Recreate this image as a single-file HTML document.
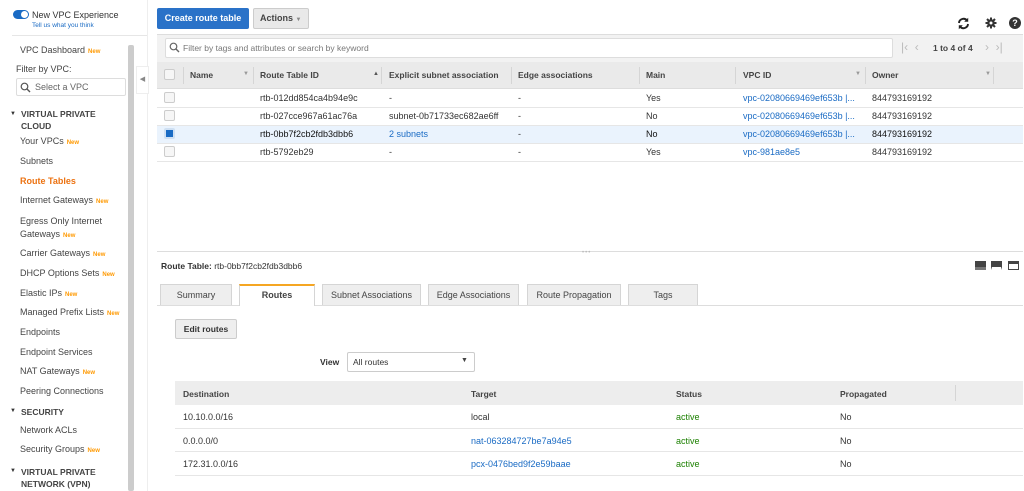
<!DOCTYPE html>
<html><head><meta charset="utf-8"><style>
*{margin:0;padding:0;box-sizing:border-box}
body{width:1024px;height:491px;overflow:hidden;background:#fff;font-family:"Liberation Sans",sans-serif;font-size:9px;color:#333;position:relative}
.a{position:absolute;white-space:nowrap}
.nav{font-size:9px;color:#444;left:20px}
.new{color:#f90;font-size:6px;font-weight:bold;margin-left:3px}
.hdr{font-weight:bold;font-size:8.5px;color:#444}
.cb{position:absolute;width:11px;height:11px;border:1px solid #ccc;border-radius:2px;background:#f6f6f6}
.lnk{color:#1a6bc4}
.tab{position:absolute;top:284px;height:21px;border:1px solid #d5d5d5;border-bottom:none;background:#eee;text-align:center;line-height:20px;font-size:9px;color:#444}
.sep{position:absolute;height:1px;background:#e6e6e6}
</style></head><body>
<div class="a" style="left:13px;top:10px;width:16px;height:9px;border-radius:5px;background:#1a6bc4"></div>
<div class="a" style="left:21px;top:11px;width:7px;height:7px;border-radius:50%;background:#fff"></div>
<div class="a" style="left:32px;top:10px;font-size:9px;color:#333">New VPC Experience</div>
<div class="a" style="left:32px;top:22px;font-size:6.5px;color:#1a6bc4">Tell us what you think</div>
<div class="sep" style="left:12px;top:35px;width:136px"></div>
<div class="a" style="left:128px;top:45px;width:6px;height:446px;background:#ccc;border-radius:2px"></div>
<div class="a" style="left:147px;top:0;width:1px;height:491px;background:#eee"></div>
<div class="a" style="left:136px;top:66px;width:13px;height:28px;border:1px solid #eee;background:#fff;font-size:7px;color:#888;line-height:26px;text-align:center">◀</div>
<div class="a nav" style="top:45px">VPC Dashboard<span class="new">New</span></div>
<div class="a nav" style="left:16px;top:64px">Filter by VPC:</div>
<div class="a" style="left:16px;top:78px;width:110px;height:18px;border:1px solid #ddd;border-radius:2px;font-size:9px;color:#666;line-height:16px;padding-left:18px">Select a VPC</div>
<svg class="a" style="left:20px;top:82px" width="11" height="11"><circle cx="4.5" cy="4.5" r="3.3" fill="none" stroke="#555" stroke-width="1.2"/><line x1="7" y1="7" x2="10" y2="10" stroke="#555" stroke-width="1.4"/></svg>
<div class="a" style="left:10px;top:111px;font-size:6px">▼</div>
<div class="a" style="left:21px;top:108px;font-weight:bold;font-size:8.5px;color:#444;line-height:12px">VIRTUAL PRIVATE<br>CLOUD</div>
<div class="a nav" style="top:136px">Your VPCs<span class="new">New</span></div>
<div class="a nav" style="top:156px">Subnets</div>
<div class="a nav" style="top:176px;color:#ec7211;font-weight:bold">Route Tables</div>
<div class="a nav" style="top:195px">Internet Gateways<span class="new">New</span></div>
<div class="a nav" style="top:215px;line-height:13px">Egress Only Internet<br>Gateways<span class="new">New</span></div>
<div class="a nav" style="top:248px">Carrier Gateways<span class="new">New</span></div>
<div class="a nav" style="top:268px">DHCP Options Sets<span class="new">New</span></div>
<div class="a nav" style="top:288px">Elastic IPs<span class="new">New</span></div>
<div class="a nav" style="top:307px">Managed Prefix Lists<span class="new">New</span></div>
<div class="a nav" style="top:327px">Endpoints</div>
<div class="a nav" style="top:347px">Endpoint Services</div>
<div class="a nav" style="top:366px">NAT Gateways<span class="new">New</span></div>
<div class="a nav" style="top:386px">Peering Connections</div>
<div class="a" style="left:10px;top:408px;font-size:6px">▼</div>
<div class="a" style="left:21px;top:407px;font-weight:bold;font-size:8.5px;color:#444">SECURITY</div>
<div class="a nav" style="top:425px">Network ACLs</div>
<div class="a nav" style="top:444px">Security Groups<span class="new">New</span></div>
<div class="a" style="left:10px;top:468px;font-size:6px">▼</div>
<div class="a" style="left:21px;top:466px;font-weight:bold;font-size:8.5px;color:#444;line-height:12px">VIRTUAL PRIVATE<br>NETWORK (VPN)</div>
<div class="a" style="left:157px;top:8px;width:92px;height:21px;background:#2a72c8;border-radius:2px;color:#fff;font-weight:bold;font-size:9px;line-height:21px;text-align:center">Create route table</div>
<div class="a" style="left:253px;top:8px;width:56px;height:21px;background:#e9e9e9;border:1px solid #ccc;border-radius:2px;color:#444;font-weight:bold;font-size:9px;line-height:19px;padding-left:6px">Actions <span style="font-size:6px;color:#888">▼</span></div>
<svg class="a" style="left:957px;top:17px" width="13" height="13" viewBox="0 0 13 13"><path d="M2 6a4.5 4.5 0 0 1 8-2.5M11 7a4.5 4.5 0 0 1-8 2.5" fill="none" stroke="#222" stroke-width="1.9"/><path d="M11.2 0.8v4H7.2zM1.8 12.2v-4h4z" fill="#222"/></svg>
<svg class="a" style="left:985px;top:17px" width="12" height="12" viewBox="0 0 12 12"><circle cx="6" cy="6" r="3.8" fill="#333"/><g stroke="#333" stroke-width="2"><line x1="6" y1="0.5" x2="6" y2="11.5"/><line x1="0.5" y1="6" x2="11.5" y2="6"/><line x1="2" y1="2" x2="10" y2="10"/><line x1="10" y1="2" x2="2" y2="10"/></g><circle cx="6" cy="6" r="1.5" fill="#fff"/></svg>
<div class="a" style="left:1009px;top:17px;width:12px;height:12px;border-radius:50%;background:#333;color:#fff;font-weight:bold;font-size:9px;line-height:12px;text-align:center">?</div>
<div class="a" style="left:157px;top:34px;width:866px;height:28px;background:#f2f2f2;border-top:1px solid #ddd"></div>
<div class="a" style="left:165px;top:38px;width:728px;height:20px;background:#fff;border:1px solid #ddd;border-radius:2px;font-size:8.5px;color:#777;line-height:18px;padding-left:17px">Filter by tags and attributes or search by keyword</div>
<svg class="a" style="left:169px;top:42px" width="11" height="11"><circle cx="4.5" cy="4.5" r="3.3" fill="none" stroke="#666" stroke-width="1.2"/><line x1="7" y1="7" x2="10" y2="10" stroke="#666" stroke-width="1.4"/></svg>
<div class="a" style="left:901px;top:40px;color:#bbb;font-size:12px">|‹ &nbsp;‹</div>
<div class="a" style="left:933px;top:43px;font-weight:bold;font-size:8.5px;color:#444">1 to 4 of 4</div>
<div class="a" style="left:985px;top:40px;color:#bbb;font-size:12px">› &nbsp;›|</div>
<div class="a" style="left:157px;top:62px;width:866px;height:27px;background:#eaeaea;border-bottom:1px solid #ddd"></div>
<div class="cb" style="left:164px;top:69px"></div>
<div class="a hdr" style="left:190px;top:70px">Name</div><div class="a" style="left:243px;top:71px;font-size:6px;color:#999">▼</div>
<div class="a hdr" style="left:260px;top:70px">Route Table ID</div><div class="a" style="left:373px;top:71px;font-size:6px;color:#555">▲</div>
<div class="a hdr" style="left:389px;top:70px">Explicit subnet association</div>
<div class="a hdr" style="left:518px;top:70px">Edge associations</div>
<div class="a hdr" style="left:646px;top:70px">Main</div>
<div class="a hdr" style="left:743px;top:70px">VPC ID</div><div class="a" style="left:855px;top:71px;font-size:6px;color:#999">▼</div>
<div class="a hdr" style="left:872px;top:70px">Owner</div><div class="a" style="left:985px;top:71px;font-size:6px;color:#999">▼</div>
<div class="a" style="left:183px;top:67px;width:1px;height:17px;background:#d5d5d5"></div>
<div class="a" style="left:253px;top:67px;width:1px;height:17px;background:#d5d5d5"></div>
<div class="a" style="left:381px;top:67px;width:1px;height:17px;background:#d5d5d5"></div>
<div class="a" style="left:511px;top:67px;width:1px;height:17px;background:#d5d5d5"></div>
<div class="a" style="left:639px;top:67px;width:1px;height:17px;background:#d5d5d5"></div>
<div class="a" style="left:735px;top:67px;width:1px;height:17px;background:#d5d5d5"></div>
<div class="a" style="left:865px;top:67px;width:1px;height:17px;background:#d5d5d5"></div>
<div class="a" style="left:993px;top:67px;width:1px;height:17px;background:#d5d5d5"></div>
<div class="a" style="left:157px;top:125px;width:866px;height:18px;background:#eaf3fd"></div>
<div class="sep" style="left:157px;top:107px;width:866px"></div>
<div class="sep" style="left:157px;top:125px;width:866px"></div>
<div class="sep" style="left:157px;top:143px;width:866px"></div>
<div class="sep" style="left:157px;top:161px;width:866px"></div>
<div class="cb" style="left:164px;top:92px"></div>
<div class="cb" style="left:164px;top:110px"></div>
<div class="cb" style="left:164px;top:128px;background:#1a6bc4;border:2px solid #cfe0f3"></div>
<div class="cb" style="left:164px;top:146px"></div>
<div class="a" style="left:260px;top:93px">rtb-012dd854ca4b94e9c</div><div class="a" style="left:389px;top:93px">-</div><div class="a" style="left:518px;top:93px">-</div><div class="a" style="left:646px;top:93px">Yes</div><div class="a lnk" style="left:743px;top:93px">vpc-02080669469ef653b |...</div><div class="a" style="left:872px;top:93px">844793169192</div>
<div class="a" style="left:260px;top:111px">rtb-027cce967a61ac76a</div><div class="a" style="left:389px;top:111px">subnet-0b71733ec682ae6ff</div><div class="a" style="left:518px;top:111px">-</div><div class="a" style="left:646px;top:111px">No</div><div class="a lnk" style="left:743px;top:111px">vpc-02080669469ef653b |...</div><div class="a" style="left:872px;top:111px">844793169192</div>
<div class="a" style="left:260px;top:129px;color:#111">rtb-0bb7f2cb2fdb3dbb6</div><div class="a lnk" style="left:389px;top:129px">2 subnets</div><div class="a" style="left:518px;top:129px">-</div><div class="a" style="left:646px;top:129px;color:#111">No</div><div class="a lnk" style="left:743px;top:129px">vpc-02080669469ef653b |...</div><div class="a" style="left:872px;top:129px;color:#111">844793169192</div>
<div class="a" style="left:260px;top:147px">rtb-5792eb29</div><div class="a" style="left:389px;top:147px">-</div><div class="a" style="left:518px;top:147px">-</div><div class="a" style="left:646px;top:147px">Yes</div><div class="a lnk" style="left:743px;top:147px">vpc-981ae8e5</div><div class="a" style="left:872px;top:147px">844793169192</div>
<div class="a" style="left:157px;top:251px;width:866px;height:1px;background:#ddd"></div>
<div class="a" style="left:582px;top:250px;font-size:6px;color:#bbb;letter-spacing:1px">•••</div>
<div class="a" style="left:161px;top:261px;font-size:8.5px;color:#333"><b>Route Table:</b> rtb-0bb7f2cb2fdb3dbb6</div>
<div class="a" style="left:975px;top:261px;width:11px;height:9px;background:#444;border-bottom:3px solid #777"></div>
<div class="a" style="left:991px;top:261px;width:11px;height:9px;background:#444;border:1px solid #444;border-bottom:3px solid #fff"></div>
<div class="a" style="left:1008px;top:261px;width:11px;height:9px;background:#fff;border:1.5px solid #444;border-top:3px solid #444"></div>
<div class="a" style="left:157px;top:305px;width:866px;height:1px;background:#ddd"></div>
<div class="tab" style="left:160px;width:72px">Summary</div>
<div class="tab" style="left:239px;width:76px;background:#fff;border-top:2px solid #f5a623;font-weight:bold;height:22px;line-height:19px">Routes</div>
<div class="tab" style="left:322px;width:99px">Subnet Associations</div>
<div class="tab" style="left:428px;width:91px">Edge Associations</div>
<div class="tab" style="left:527px;width:94px">Route Propagation</div>
<div class="tab" style="left:628px;width:70px">Tags</div>
<div class="a" style="left:175px;top:319px;width:62px;height:20px;background:#eee;border:1px solid #ccc;border-radius:2px;font-weight:bold;font-size:8.5px;line-height:18px;text-align:center;color:#333">Edit routes</div>
<div class="a" style="left:320px;top:357px;font-weight:bold;font-size:8.5px">View</div>
<div class="a" style="left:347px;top:352px;width:128px;height:20px;border:1px solid #ccc;border-radius:2px;font-size:8.5px;line-height:18px;padding-left:5px">All routes</div>
<div class="a" style="left:461px;top:357px;font-size:7px;color:#444">▼</div>
<div class="a" style="left:175px;top:381px;width:848px;height:24px;background:#ededed"></div>
<div class="a" style="left:955px;top:385px;width:1px;height:16px;background:#d5d5d5"></div>
<div class="a hdr" style="left:183px;top:389px">Destination</div>
<div class="a hdr" style="left:471px;top:389px">Target</div>
<div class="a hdr" style="left:676px;top:389px">Status</div>
<div class="a hdr" style="left:840px;top:389px">Propagated</div>
<div class="sep" style="left:175px;top:428px;width:848px"></div>
<div class="sep" style="left:175px;top:451px;width:848px"></div>
<div class="sep" style="left:175px;top:475px;width:848px"></div>
<div class="a" style="left:183px;top:412px">10.10.0.0/16</div><div class="a" style="left:471px;top:412px">local</div><div class="a" style="left:676px;top:412px;color:#1d8102">active</div><div class="a" style="left:840px;top:412px">No</div>
<div class="a" style="left:183px;top:436px">0.0.0.0/0</div><div class="a lnk" style="left:471px;top:436px">nat-063284727be7a94e5</div><div class="a" style="left:676px;top:436px;color:#1d8102">active</div><div class="a" style="left:840px;top:436px">No</div>
<div class="a" style="left:183px;top:459px">172.31.0.0/16</div><div class="a lnk" style="left:471px;top:459px">pcx-0476bed9f2e59baae</div><div class="a" style="left:676px;top:459px;color:#1d8102">active</div><div class="a" style="left:840px;top:459px">No</div>
</body></html>
